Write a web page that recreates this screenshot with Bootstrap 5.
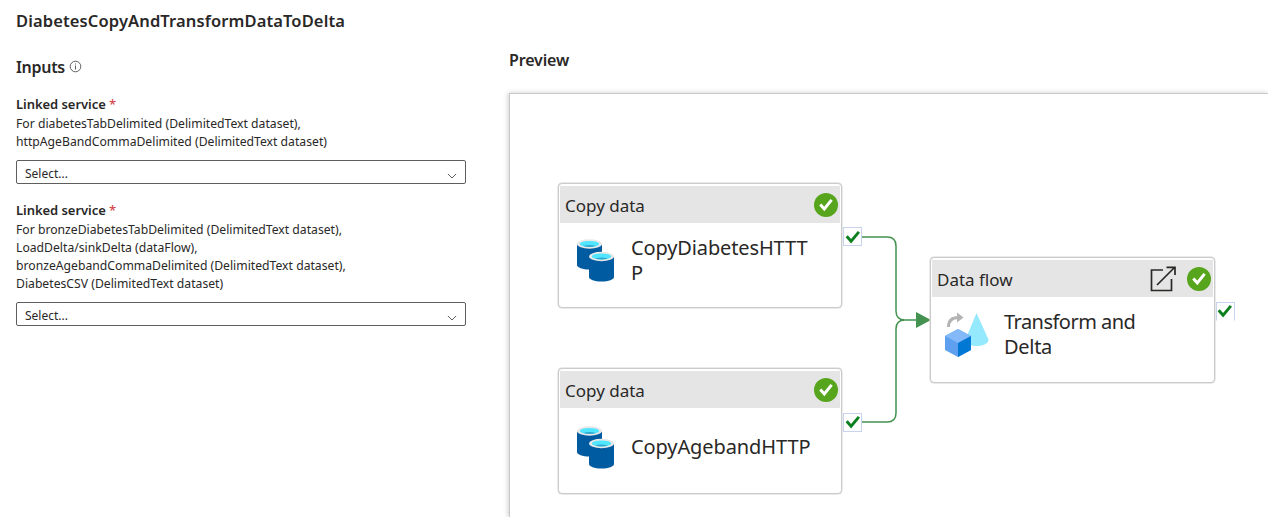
<!DOCTYPE html>
<html lang="en">
<head>
<meta charset="utf-8">
<meta name="viewport" content="width=device-width, initial-scale=1">
<title>DiabetesCopyAndTransformDataToDelta</title>
<link href="https://cdn.jsdelivr.net/npm/bootstrap@5.3.0/dist/css/bootstrap.min.css" rel="stylesheet">
<style>
body{font-family:"Noto Sans","Open Sans",sans-serif;color:#292827;background:#fff;height:517px;overflow:hidden}
.inputs-pane{width:509px;padding:9px 0 0 16px}
.page-title{font-size:16.5px;font-weight:600;line-height:24px;letter-spacing:.12px}
.section-title{font-size:16px;font-weight:600;line-height:24px;letter-spacing:-.3px}
.inputs-head{margin-top:22px}
.inputs-head svg{margin-left:4px;margin-top:-1px}
.field{width:450px;margin-top:16px}
.field + .field{margin-top:17px}
.field-label{font-size:13px;font-weight:600;line-height:18px;letter-spacing:-.05px}
.req{color:#d13438;font-weight:400}
.field-help{font-size:12.2px;line-height:18px;padding-top:2px}
.picker{height:24px;border:1px solid #605e5c;border-radius:2px;font-size:12px;line-height:22px;margin-top:9px;padding:3px 8px 0;background:#fff}
.canvas{height:424px;border:1px solid #c8c8c8;border-width:1px 0 0 1px;box-shadow:-1px 0 5px rgba(0,0,0,.2)}
.preview-title{font-size:16px;font-weight:600;line-height:24px;padding-top:48px;margin-bottom:21px;letter-spacing:-.15px}
.activity{position:absolute;width:284px;height:125px;border:1px solid #cbcbcb;border-radius:4px;background:#fff;box-shadow:0 0 0 .5px #d6d6d6;padding:2px 1px}
.activity-head{background:#e5e5e5;height:37px;padding:2px 2px 0 5px;font-size:17px;line-height:24px}
.activity-head svg{position:relative;top:-1px}
.activity-body{padding:12px 0 0 17px;gap:16px}
.activity-body svg{margin-top:1px}
.n2 .activity-body{padding-top:17px}
.n3 .activity-body{padding-left:11px;gap:15px}
.activity-name{font-size:20px;line-height:25px;letter-spacing:-.13px}
.n2 .activity-name{letter-spacing:-.1px;margin-top:-2px}
.n3 .activity-name{letter-spacing:-.53px}
.n3 .last-line{letter-spacing:-.3px}
.open-icon{margin-right:11px}
.n1{left:48px;top:89px}.n2{left:48px;top:274px;height:126px}.n3{left:420px;top:163px;width:285px;height:126px}
.port{position:absolute;width:19px;height:19px;border:1px solid #c8d3ee;background:#fff}
.p1{left:333px;top:133px}.p2{left:333px;top:319px}.p3{left:706px;top:208px;border-bottom-color:transparent}
.port svg{display:block}
.p3 svg{margin:-1px 0 0 -1px}
.p2 svg{margin-top:-1px}
.wires{left:0;top:0}
</style>
</head>
<body>
<svg class="d-none">
  <symbol id="tick" viewBox="0 0 24 24"><circle cx="12" cy="12" r="12" fill="#57a51c"/><path d="M6.300 11.500l4 4.400 7.300-9" fill="none" stroke="#fff" stroke-width="3"/></symbol>
  <symbol id="porttick" viewBox="0 0 17 17"><path d="M2.700 8.200l4.400 5 7.800-9.300" fill="none" stroke="#0c801f" stroke-width="2.900"/></symbol>
  <symbol id="chev" viewBox="0 0 10 6"><path d="M.9.9L5 5 9.100.9" fill="none" stroke="#605e5c"/></symbol>
  <symbol id="drums" viewBox="0 0 38 43">
    <path d="M0 5.500V26c0 2.400 5.500 4.500 12.500 4.500S25 28.400 25 26V5.500z" fill="#005ba1"/>
    <ellipse cx="12.500" cy="5" rx="12.500" ry="4.700" fill="#e8e8e8"/><ellipse cx="12.500" cy="4.900" rx="9.700" ry="3" fill="#50e6ff"/><path d="M6 7q6.500-2 13 0-6.500 1.800-13 0" fill="#32a9cf"/>
    <path d="M12 18v20c0 2.400 5.500 4.500 12.500 4.500S37 40.400 37 38V18z" fill="#005ba1"/>
    <ellipse cx="24.500" cy="17.500" rx="12.500" ry="4.700" fill="#e8e8e8"/><ellipse cx="24.500" cy="17.400" rx="9.700" ry="3" fill="#50e6ff"/><path d="M18 19.500q6.500-2 13 0-6.500 1.800-13 0" fill="#32a9cf"/>
  </symbol>
</svg>
<div class="d-flex">
  <section class="inputs-pane flex-shrink-0">
    <h1 class="page-title mb-0">DiabetesCopyAndTransformDataToDelta</h1>
    <div class="inputs-head d-flex align-items-center">
      <h2 class="section-title mb-0">Inputs</h2>
      <svg width="13" height="13" viewBox="0 0 13 13"><circle cx="6.500" cy="6.500" r="5.300" fill="none" stroke="#605e5c"/><path d="M6.500 5.500v4M6.500 3.500v1" stroke="#605e5c"/></svg>
    </div>
    <div class="field">
      <div class="field-label">Linked service <span class="req">*</span></div>
      <div class="field-help">For diabetesTabDelimited (DelimitedText dataset),<br>httpAgeBandCommaDelimited (DelimitedText dataset)</div>
      <div class="picker d-flex justify-content-between align-items-center"><span>Select...</span><svg width="10" height="6" class="mt-1"><use href="#chev"/></svg></div>
    </div>
    <div class="field">
      <div class="field-label">Linked service <span class="req">*</span></div>
      <div class="field-help">For bronzeDiabetesTabDelimited (DelimitedText dataset),<br>LoadDelta/sinkDelta (dataFlow),<br>bronzeAgebandCommaDelimited (DelimitedText dataset),<br>DiabetesCSV (DelimitedText dataset)</div>
      <div class="picker d-flex justify-content-between align-items-center"><span>Select...</span><svg width="10" height="6" class="mt-1"><use href="#chev"/></svg></div>
    </div>
  </section>
  <section class="flex-grow-1">
    <h2 class="preview-title">Preview</h2>
    <div class="canvas position-relative">
      <svg class="wires position-absolute" width="758" height="423" viewBox="510 94 758 423" fill="none" stroke="#43924f" stroke-width="1.500">
        <path d="M861 237H887q9 0 9 9V311q0 9 9 9H918M861 422H887q9 0 9-9V329q0-9 9-9"/><path d="M916 312l15 8-15 8z" fill="#43924f" stroke="none"/>
      </svg>
      <div class="activity n1">
        <div class="activity-head d-flex align-items-center justify-content-between"><span>Copy data</span><svg width="24" height="24"><use href="#tick"/></svg></div>
        <div class="activity-body d-flex align-items-center"><svg width="38" height="43"><use href="#drums"/></svg><div class="activity-name">CopyDiabetesHTTT<br>P</div></div>
      </div>
      <div class="activity n2">
        <div class="activity-head d-flex align-items-center justify-content-between"><span>Copy data</span><svg width="24" height="24"><use href="#tick"/></svg></div>
        <div class="activity-body d-flex align-items-center"><svg width="38" height="43"><use href="#drums"/></svg><div class="activity-name">CopyAgebandHTTP</div></div>
      </div>
      <div class="activity n3">
        <div class="activity-head d-flex align-items-center"><span class="me-auto">Data flow</span>
          <svg class="open-icon" width="26" height="26" viewBox="0 0 26 26" fill="none" stroke="#292827" stroke-width="1.700"><path d="M13 4H1.500V24.500H21.500V13M7 19L24.500 1.500M16.500 1.300H25V9"/></svg><svg width="24" height="24"><use href="#tick"/></svg></div>
        <div class="activity-body d-flex align-items-center"><svg width="46" height="46" viewBox="943 312 46 46"><path d="M976.500 313l12 26.500c0 4-5 6.500-12 6.500s-11-2.500-11-6.500z" fill="#94e9fd"/><path d="M958 329l13 7v14l-13 7-13-7v-14z" fill="#5ea0ef"/><path d="M958 329l13 7-13 7-13-7z" fill="#83b9f9"/><path d="M958 343l13-7v14l-13 7z" fill="#0078d4"/><path d="M948.500 327q0-9.500 10-9.500" stroke="#b3b3b3" stroke-width="3" fill="none"/><path d="M957 312.500l6.500 5-6.500 5z" fill="#b3b3b3"/></svg><div class="activity-name">Transform and<br><span class="last-line">Delta</span></div></div>
      </div>
      <div class="port p1"><svg width="17" height="17"><use href="#porttick"/></svg></div>
      <div class="port p2"><svg width="17" height="17"><use href="#porttick"/></svg></div>
      <div class="port p3"><svg width="17" height="17"><use href="#porttick"/></svg></div>
    </div>
  </section>
</div>
<script src="https://cdn.jsdelivr.net/npm/bootstrap@5.3.0/dist/js/bootstrap.bundle.min.js"></script>
</body>
</html>
